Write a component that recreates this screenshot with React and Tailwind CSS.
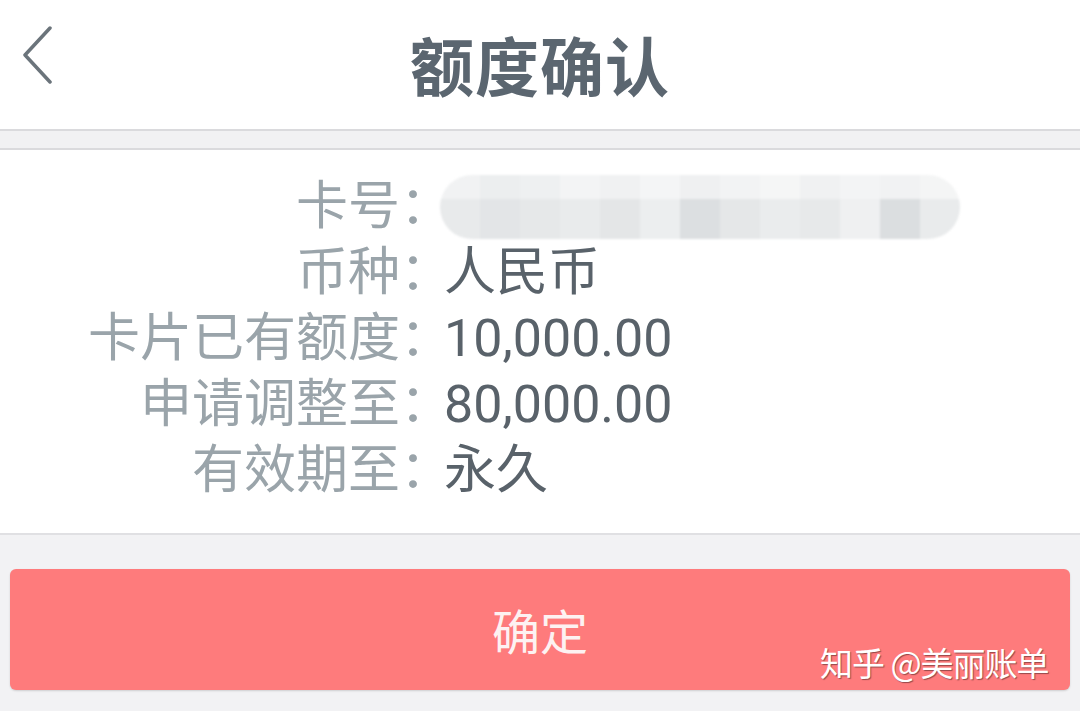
import React from 'react'

const rows = [
  { label: '币种：', value: '人民币' },
  { label: '卡片已有额度：', value: '10,000.00' },
  { label: '申请调整至：', value: '80,000.00' },
  { label: '有效期至：', value: '永久' },
]

// mosaic blur over the card number
const topCells = ['#f1f2f3', '#eceeef', '#eef0f1', '#f3f4f5', '#f0f1f2', '#f4f5f6', '#eff0f1', '#f2f3f4', '#f5f6f6', '#f0f1f2', '#f3f4f5', '#f1f2f3', '#f4f5f5']
const bottomCells = ['#e8eaeb', '#e3e5e7', '#e6e8e9', '#e9ebec', '#e4e6e7', '#eceeef', '#dcdfe1', '#e5e7e8', '#eaeced', '#e7e9ea', '#eff0f1', '#dbdee0', '#e9ebec']

function MaskedNumber() {
  return (
    <div className="w-[520px] h-[64px] rounded-[32px] overflow-hidden flex flex-col blur-[1px]">
      <div className="flex h-[24px]">
        {topCells.map((c, i) => (
          <div key={i} className="flex-1" style={{ background: c }} />
        ))}
      </div>
      <div className="flex flex-1">
        {bottomCells.map((c, i) => (
          <div key={i} className="flex-1" style={{ background: c }} />
        ))}
      </div>
    </div>
  )
}

export default function App() {
  return (
    <div
      className="relative w-[1080px] h-[711px] bg-[#f2f2f4] overflow-hidden"
      style={{ fontFamily: 'Roboto, "Noto Sans CJK SC", sans-serif' }}
    >
      {/* header */}
      <div className="relative h-[129px] bg-white flex items-center justify-center">
        <button className="absolute left-[20px] top-[26px] w-[36px] h-[58px]">
          <svg width="36" height="58" viewBox="0 0 36 58" fill="none">
            <path d="M30 2 L5 29 L30 56" stroke="#6b747b" strokeWidth="3.5" strokeLinecap="round" strokeLinejoin="round" />
          </svg>
        </button>
        <h1 className="text-[64px] font-bold text-[#5b6670] leading-none tracking-[1px] -mt-[4px]" style={{ fontFamily: '"Noto Sans CJK SC", sans-serif' }}>
          额度确认
        </h1>
      </div>
      <div className="h-[21px] border-y-2 border-[#dadadd] bg-[#f1f1f3]" />

      {/* details */}
      <div className="bg-white pt-[24px] pb-[29px] border-b-2 border-[#e0e0e3]">
        <div className="grid grid-cols-[452px_1fr] text-[52px] leading-[66px]">
          <div className="text-right text-[#9aa4aa]">卡号：</div>
          <div className="flex items-center -ml-[12px]">
            <MaskedNumber />
          </div>
          {rows.map((r) => (
            <React.Fragment key={r.label}>
              <div className="text-right text-[#9aa4aa]">{r.label}</div>
              <div className="text-[#59626a] -ml-[8px]">{r.value}</div>
            </React.Fragment>
          ))}
        </div>
      </div>

      {/* confirm */}
      <div className="px-[10px] pt-[34px]">
        <button className="w-full h-[121px] rounded-[6px] bg-[#fe7b7c] shadow-[0_1px_2px_rgba(0,0,0,0.15)] text-[48px] text-[#fdf2f2] pt-[8px]">
          确定
        </button>
      </div>

      <div
        className="absolute left-[820px] top-[646px] text-[33px] leading-none text-white tracking-[-1px]"
        style={{ textShadow: '1px 1px 1px rgba(80,40,40,0.6)', fontFamily: '"Noto Sans CJK SC", sans-serif' }}
      >
        知乎 @美丽账单
      </div>
    </div>
  )
}
